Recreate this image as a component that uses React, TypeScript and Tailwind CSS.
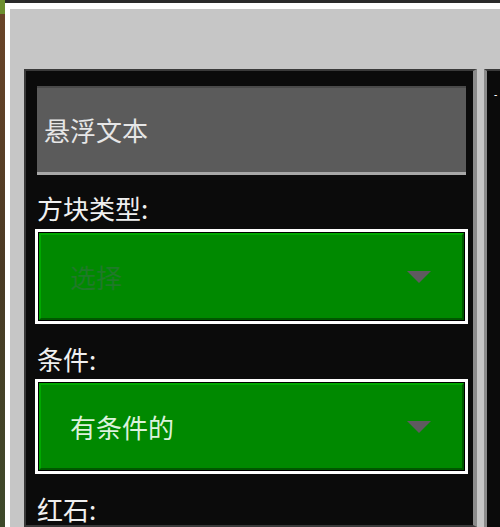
import React from 'react';

const font = "font-['Noto_Sans_CJK_SC','Noto_Sans',sans-serif]";

const Arrow = () => (
  <svg width="24" height="12" viewBox="0 0 24 12" className="shrink-0">
    <polygon points="0,0 24,0 12,12" fill="#5e5a60" />
  </svg>
);

interface DropdownProps {
  value: string;
  placeholder?: boolean;
}

const Dropdown = ({ value, placeholder }: DropdownProps) => (
  <div className="w-[433px] h-[95px] border-[3px] border-white bg-black p-[1px]">
    <div className="h-full flex items-center justify-between pl-[29px] pr-[31px] bg-[#008900] border-t-2 border-l-2 border-[#00a800] border-b-2 border-r-2 border-b-[#005800] border-r-[#005800]">
      <span className={`text-[26px] leading-[30px] ${placeholder ? 'text-[#1f7a28]' : 'text-[#dcf2dc]'}`}>
        {value}
      </span>
      <Arrow />
    </div>
  </div>
);

const Label = ({ text, className }: { text: string; className: string }) => (
  <div className={`ml-[2px] text-[26px] leading-[30px] text-[#f0f0f0] ${className}`}>{text}</div>
);

export default function App() {
  return (
    <div className={`w-[500px] h-[527px] overflow-hidden flex bg-[#2a2a2a] ${font}`}>
      {/* world behind the window */}
      <div className="w-[5px] shrink-0 flex flex-col">
        <div className="h-[14px] bg-[#6d8f2f]" />
        <div className="flex-1 bg-gradient-to-b from-[#6a4428] via-[#4a3a24] to-[#3d4a2a]" />
      </div>

      {/* window */}
      <div className="flex-1 min-w-0 mt-[3px] border-l-[5px] border-t-[6px] border-white bg-[#c6c6c6] pl-[14px] pt-[60px] flex">
        {/* main panel */}
        <div className="w-[453px] shrink-0 border-2 border-[#3a3a3a] border-r-4 border-r-[#8b8b8b] bg-[#0b0b0b] pl-[9px] pt-[15px]">
          <div className="ml-[2px] w-[429px] h-[89px] flex items-center pl-[7px] bg-[#5b5b5b] border-t-2 border-[#4a4a4a] border-b-[3px] border-b-[#a8a8a8]">
            <span className="text-[26px] leading-[30px] text-[#e6e6e6]">悬浮文本</span>
          </div>

          <Label text="方块类型:" className="mt-[18px]" />
          <div className="mt-[6px]">
            <Dropdown value="选择" placeholder />
          </div>

          <Label text="条件:" className="mt-[20px]" />
          <div className="mt-[5px]">
            <Dropdown value="有条件的" />
          </div>

          <Label text="红石:" className="mt-[20px]" />
        </div>

        {/* second panel, cut off at the right */}
        <div className="ml-[7px] flex-1 border-l-[3px] border-t-2 border-[#8b8b8b] border-t-[#3a3a3a] bg-[#0b0b0b] pt-[20px] pl-[7px]">
          <span className="block text-[9px] leading-[8px] font-bold text-white">-</span>
        </div>
      </div>
    </div>
  );
}
